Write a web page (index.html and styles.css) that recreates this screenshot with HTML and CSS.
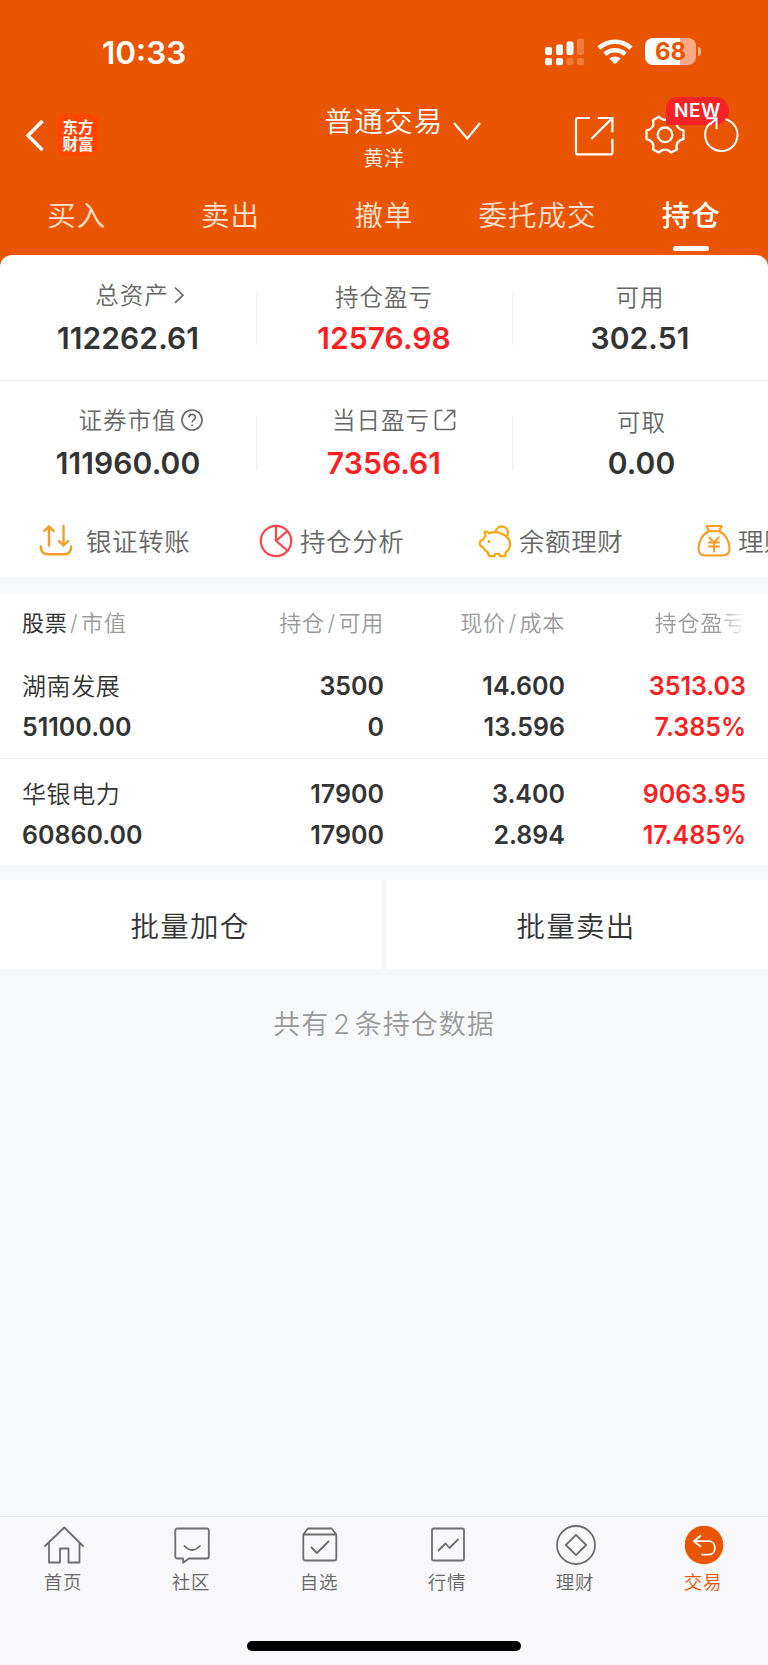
FILE: index.html
```html
<!DOCTYPE html>
<html lang="zh-CN">
  <head>
  <meta charset="utf-8">
  <title>普通交易</title>
  <link rel="stylesheet" href="styles.css">
  </head>
  <body>
    <header class="header">
      <div class="status">
        <span class="time">10:33</span>
        <svg class="signal" width="40" height="28" viewBox="0 0 40 28" fill="#fff">
          <rect x="0" y="9" width="7" height="8" rx="2"/>
          <rect x="11" y="6.500" width="7" height="10.500" rx="2"/>
          <rect x="21.500" y="3.500" width="7" height="13.500" rx="2"/>
          <rect x="32" y="0.500" width="7" height="16.500" rx="2" opacity=".22"/>
          <rect x="0" y="20" width="7" height="7.300" rx="2"/>
          <rect x="11" y="20" width="7" height="7.300" rx="2"/>
          <rect x="21.500" y="20" width="7" height="7.300" rx="2" opacity=".22"/>
          <rect x="32" y="20" width="7" height="7.300" rx="2" opacity=".22"/>
        </svg>
        <svg class="wifi" width="36" height="26" viewBox="0 0 36 26">
          <g fill="none" stroke="#fff" stroke-width="4.600">
            <path d="M2 9.200a23 23 0 0 1 32 0"/>
            <path d="M7.800 15.200a15 15 0 0 1 20.400 0"/>
          </g>
          <path d="M12.300 19.600a8.500 8.500 0 0 1 11.400 0L18 25.300z" fill="#fff"/>
        </svg>
        <span class="battery">68</span>
        <span class="nub"></span>
      </div>

      <div class="nav">
        <svg class="back" width="20" height="34" viewBox="0 0 20 34">
          <path d="M18.500 2L4 16.500l14.500 14.500" fill="none" stroke="#fff" stroke-width="3.500"/>
        </svg>
        <div class="logo"><span>东方</span><span>财富</span></div>
        <div class="title">
          <div class="title-main">普通交易</div>
          <div class="title-sub">黄洋</div>
        </div>
        <svg class="down" width="28" height="20" viewBox="0 0 28 20">
          <path d="M1 2l13.200 15.500L27 2" fill="none" stroke="#fff" stroke-width="2.200"/>
        </svg>
        <svg class="share" width="40" height="40" viewBox="0 0 40 40" fill="none" stroke="#fff" stroke-width="2.200">
          <path d="M15.700 2H4a2 2 0 0 0-2 2v32.400a2 2 0 0 0 2 2h32.400a2 2 0 0 0 2-2V22.700M23.700 2h14.700v14.300M38 2.400L17.300 23"/>
        </svg>
        <div class="gear">
          <svg width="42" height="42" viewBox="0 0 42 42" fill="none" stroke="#fff" stroke-width="2.300" stroke-linejoin="round">
            <path d="M14.800 2.800c3.500 4 9 4 12.400 0l5.800 3.400c-1.500 5.500 1 9.200 6.500 10.300v8.600c-5.500 1.100-8 4.800-6.500 10.300l-5.800 3.200c-3.400-4-8.900-4-12.400 0L9 35.400c1.500-5.500-1-9.200-6.500-10.300v-8.600C8 15.400 10.500 11.700 9 6.200z"/>
            <circle cx="21" cy="20.800" r="7.300"/>
          </svg>
          <span class="badge">NEW</span>
        </div>
        <svg class="refresh" width="38" height="38" viewBox="0 0 38 38" fill="none" stroke="#fff" stroke-width="2">
          <path d="M23.500 3.200A16.200 16.200 0 1 1 8.500 6.800M4.200 2.300h10.300v11M14.500 2.300L8 8.500"/>
        </svg>
      </div>

      <nav class="tabs">
        <span>买入</span>
        <span>卖出</span>
        <span>撤单</span>
        <span>委托成交</span>
        <span class="on">持仓</span>
      </nav>
    </header>

    <section class="assets">
      <div class="asset-row">
        <div class="asset">
          <label class="has-icon">总资产
            <svg class="more" width="14" height="22" viewBox="0 0 14 22"><path d="M3 3.500l8 7.700-8 7.700" fill="none" stroke="#666" stroke-width="1.700"/></svg>
          </label>
          <b>112262.61</b>
        </div>
        <div class="asset"><label>持仓盈亏</label><b class="red">12576.98</b></div>
        <div class="asset"><label>可用</label><b>302.51</b></div>
      </div>
      <div class="asset-row">
        <div class="asset">
          <label class="has-icon">证券市值
            <svg width="22" height="22" viewBox="0 0 22 22" fill="none" stroke="#666" stroke-width="1.600">
              <circle cx="11" cy="11" r="10"/>
              <path d="M7.800 8.600c0-4.200 6.600-4.200 6.600-.3 0 2.500-3.300 2.500-3.300 5.200"/>
              <circle cx="11.100" cy="16.300" r=".6" fill="#666" stroke-width=".8"/>
            </svg>
          </label>
          <b>111960.00</b>
        </div>
        <div class="asset">
          <label class="has-icon today">当日盈亏
            <svg width="22" height="22" viewBox="0 0 22 22" fill="none" stroke="#666" stroke-width="1.700">
              <path d="M8.500 1.500H4a2.500 2.500 0 0 0-2.500 2.500v14A2.500 2.500 0 0 0 4 20.500h14a2.500 2.500 0 0 0 2.500-2.500v-5.500M13 1.500h7.500V8.500M20 2L10 12"/>
            </svg>
          </label>
          <b class="red">7356.61</b>
        </div>
        <div class="asset last"><label>可取</label><b>0.00</b></div>
      </div>
    </section>

    <section class="actions">
      <div class="action wide">
        <svg width="34" height="34" viewBox="0 0 34 34" fill="none" stroke="#f79b27" stroke-width="2.400" stroke-linecap="round" stroke-linejoin="round">
          <path d="M10 21.500V2.500M5.300 7L10 2.300 14.700 7M24.500 2v19.500M19.800 17l4.700 4.500 4.700-4.500M1.800 22.500c0 5 2.200 7.800 7 7.800h16.400c4.800 0 7-2.800 7-7.800"/>
        </svg>
        <span>银证转账</span>
      </div>
      <div class="action">
        <svg width="34" height="34" viewBox="0 0 34 34" fill="none" stroke="#fb4549" stroke-width="2.200">
          <circle cx="17" cy="17" r="15.200"/>
          <path d="M17 2v14.800L28.300 26.500M17 16.800L28.300 7"/>
        </svg>
        <span>持仓分析</span>
      </div>
      <div class="action">
        <svg width="34" height="34" viewBox="0 0 34 34" fill="none" stroke="#faa50c" stroke-width="2.200" stroke-linejoin="round">
          <path d="M6.800 7.500c1.800 0 3.200.5 4.200 1.800 4-1.500 8.500-1.500 12 .2 5 1.800 9 5.500 9 10.500 0 4-1.500 6.500-4.200 8.500l-.8 3.700h-5l-.8-2.200h-4l-.8 2.200h-5L9.500 28C7.500 27 6.500 26 5.500 24L2.200 21.500c-.7-3-.5-4.500.8-5l2.700-1.500 1.800-3.500c-.7-1.500-1-2.500-.7-4z"/>
          <path d="M17.500 8.200a6.300 6.300 0 1 1 11.300 4.300"/>
          <circle cx="11" cy="17.500" r=".8" fill="#faa50c" stroke-width="1.400"/>
        </svg>
        <span>余额理财</span>
      </div>
      <div class="action">
        <svg width="34" height="34" viewBox="0 0 34 34" fill="none" stroke="#fb9a25" stroke-width="2.100" stroke-linejoin="round" stroke-linecap="round">
          <path d="M9.500 2h15l-2.300 5.200H11.800zM11.800 7.200C5.500 10 1.500 17.500 1.500 24.500c0 5 2.500 7 7 7h17c4.500 0 7-2 7-7 0-7-4-14.500-10.300-17.300"/>
          <path d="M12.500 13.500l4.500 5 4.500-5M12 18.500h10M12 22.500h10M17 18.500v9"/>
        </svg>
        <span>理财</span>
      </div>
    </section>

    <section class="holdings">
      <div class="grid head">
        <span><em>股票</em><i>/</i>市值</span>
        <span>持仓<i>/</i>可用</span>
        <span>现价<i>/</i>成本</span>
        <span class="fade">持仓盈亏</span>
      </div>
      <div class="grid stock">
        <span class="name">湖南发展</span><b>3500</b><b>14.600</b><b class="red">3513.03</b>
        <b>51100.00</b><b>0</b><b>13.596</b><b class="red">7.385%</b>
      </div>
      <div class="grid stock second">
        <span class="name">华银电力</span><b>17900</b><b>3.400</b><b class="red">9063.95</b>
        <b>60860.00</b><b>17900</b><b>2.894</b><b class="red">17.485%</b>
      </div>
    </section>

    <div class="batch">
      <button>批量加仓</button>
      <button>批量卖出</button>
    </div>
    <p class="summary">共有<i>2</i>条持仓数据</p>

    <footer class="footer">
      <div class="menu">
        <div class="item">
          <svg width="42" height="42" viewBox="0 0 42 42">
            <path d="M1.500 22.500L21.300 3.500l19.200 19M6 18.500V38.500h11V24.500h8.500v14H36.500V18.500"/>
          </svg>
          <span>首页</span>
        </div>
        <div class="item">
          <svg width="42" height="42" viewBox="0 0 42 42">
            <path d="M6.300 4.500h29.500a2 2 0 0 1 2 2v26a2 2 0 0 1-2 2H17.800l-5.600 4.200v-4.200H6.300a2 2 0 0 1-2-2v-26a2 2 0 0 1 2-2zM13 21.500q8 9 16.500 0"/>
          </svg>
          <span>社区</span>
        </div>
        <div class="item">
          <svg width="42" height="42" viewBox="0 0 42 42">
            <path d="M4.300 10.500h33v24a2 2 0 0 1-2 2h-29a2 2 0 0 1-2-2zM4.300 10.500l4.500-6h24l4.500 6M12 23l6 6 12-12"/>
          </svg>
          <span>自选</span>
        </div>
        <div class="item">
          <svg width="42" height="42" viewBox="0 0 42 42">
            <rect x="5" y="4.500" width="32" height="32" rx="1.500"/>
            <path d="M11 27l7.500-7.500 4 4.500 9-9"/>
          </svg>
          <span>行情</span>
        </div>
        <div class="item">
          <svg width="42" height="42" viewBox="0 0 42 42">
            <circle cx="21" cy="21" r="19"/>
            <path d="M21 10.800L31.200 21 21 31.200 10.800 21z"/>
          </svg>
          <span>理财</span>
        </div>
        <div class="item on">
          <svg width="42" height="42" viewBox="0 0 42 42">
            <circle cx="21" cy="21" r="19.300" fill="#ea5504" stroke="none"/>
            <path d="M18 11.300l-7.200 5.900 7.200 5.600M10.800 17.200h14.700c8.500 0 8.500 13.500 0 13.500H18.500" stroke="#fff"/>
          </svg>
          <span>交易</span>
        </div>
      </div>
      <div class="home-bar"></div>
    </footer>
  </body>
</html>
```
FILE: styles.css
```css
* { box-sizing: border-box; }
html, body { margin: 0; padding: 0; }
body {
  width: 768px; height: 1665px; overflow: hidden;
  display: flex; flex-direction: column;
  background: #f7f8fa; color: #333;
  font-family: Inter, "Noto Sans CJK SC", sans-serif; font-weight: 350;
}
svg { display: block; flex: none; }
b { font-weight: 600; }
i, em { font-style: normal; }
.red { color: #fb1f22; }

/* header */
.header { height: 267px; background: #ea5504; color: #fff; flex: none; }
.status { display: flex; align-items: center; height: 103px; padding-left: 102px; }
.time { width: 443px; font-size: 31.500px; font-weight: 600; line-height: 40px; padding-top: 2px; }
.wifi { margin-left: 12px; }
.battery {
  width: 51px; height: 27px; margin-left: 12px; border-radius: 8px;
  background: linear-gradient(90deg, #fff 68%, #f6ab84 68%);
  color: #ea5504; font-size: 24px; font-weight: 700; line-height: 28px; text-align: center;
}
.nub { width: 3px; height: 9px; margin-left: 2px; border-radius: 0 3px 3px 0; background: #f6ab84; }
.nav { display: flex; align-items: center; height: 65px; padding-left: 24px; }
.logo {
  display: flex; flex-direction: column; align-items: center; justify-content: center;
  width: 42px; height: 42px; margin: -2px 0 0 13px;
  border-radius: 9px; background: #ff4500;
  font: 700 15.500px/17px "Noto Sans CJK SC", sans-serif;
}
.title { width: 130px; margin: 5px 0 0 220px; text-align: center; }
.title-main { font-size: 28.500px; line-height: 36px; letter-spacing: 1.300px; }
.title-sub { font-size: 20px; line-height: 28px; letter-spacing: .5px; margin-top: 5px; }
.down { margin: -9px 0 0 4px; }
.share { margin-left: 93px; }
.gear { position: relative; margin: -1px 0 0 30px; }
.badge {
  position: absolute; left: 22px; top: -17px; width: 63px; height: 28px;
  border-radius: 11px 14px 14px 0; background: #f52328;
  font-size: 19px; font-weight: 600; line-height: 28px; text-align: center; letter-spacing: .5px;
}
.refresh { position: relative; margin: -1px 0 0 16px; }
.tabs { display: flex; height: 87px; }
.tabs span {
  flex: 1; display: flex; flex-direction: column; align-items: center;
  padding-top: 28px; font-size: 28.500px; line-height: 40px; letter-spacing: 1px; color: #fde0cf;
}
.tabs .on { color: #fff; font-weight: 500; }
.tabs .on:after { content: ""; width: 36px; height: 5px; margin-top: 10px; border-radius: 3px; background: #fff; }

/* asset summary */
.assets { position: relative; margin-top: -12px; border-radius: 12px 12px 0 0; background: #fff; flex: none; }
.asset-row { display: flex; height: 125px; padding-top: 23px; }
.asset-row + .asset-row { border-top: 1px solid #f2f2f2; padding-top: 22px; }
.asset { flex: 0 0 256px; display: flex; flex-direction: column; align-items: center; }
.asset + .asset { background: linear-gradient(#f0f0f0, #f0f0f0) 0 13px / 1px 54px no-repeat; }
.asset label {
  display: flex; align-items: center; height: 36px;
  color: #666; font-size: 23.500px; letter-spacing: 1px;
}
.asset .has-icon { height: 32px; margin-bottom: 4px; padding-left: 25px; }
.asset .today { padding-left: 20px; }
.asset label svg { margin: 2px 0 0 4px; }
.asset label .more { margin-left: 3px; }
.asset b { font-size: 30px; line-height: 48px; letter-spacing: .1px; }
.asset.last { padding-left: 3px; }

/* shortcuts */
.actions { display: flex; height: 72px; padding-left: 39px; background: #fff; overflow: hidden; flex: none; }
.action {
  display: flex; align-items: center; flex: 0 0 219px; gap: 7px;
  color: #666; font-size: 25.500px; letter-spacing: .6px; white-space: nowrap;
}
.action span { padding-bottom: 3px; }
.action.wide { gap: 13px; flex-basis: 220px; }

/* holdings */
.holdings { margin-top: 17px; background: #fff; flex: none; }
.grid { display: grid; grid-template-columns: 182px 180px 181px 181px; padding: 0 22px; }
.grid > * { text-align: right; }
.grid > :nth-child(4n+1) { text-align: left; }
.head { height: 57px; padding-bottom: 4px; align-items: center; color: #999; font-size: 22px; letter-spacing: .8px; }
.head em { color: #333; font-weight: 400; }
.head i { margin: 0 2.500px; }
.fade { -webkit-mask: linear-gradient(90deg, #000 84%, transparent); }
.stock { height: 107px; padding-top: 15px; grid-template-rows: 41px 41px; font-size: 25px; line-height: 41px; }
.stock.second { border-top: 1px solid #eee; }
.name { font-size: 24px; letter-spacing: .6px; }

.batch { display: flex; gap: 4px; margin-top: 15px; flex: none; }
.batch button {
  flex: 1; height: 89px; padding: 0 2px 0 0; border: none; background: #fff;
  color: #333; font: inherit; font-size: 28.500px; letter-spacing: 1.200px;
}
.summary { margin: 36px 0 0; text-align: center; color: #999; font-size: 27px; line-height: 40px; letter-spacing: 1px; }
.summary i { margin: 0 4px; }

/* bottom menu */
.footer { height: 149px; margin-top: auto; border-top: 1px solid #e8e9eb; background: #f8f8fa; flex: none; }
.menu { display: flex; height: 124px; padding-top: 7px; }
.item {
  flex: 1; display: flex; flex-direction: column; align-items: center;
  color: #666; font-size: 18.500px; line-height: 32px; letter-spacing: .8px;
}
.item span { margin-right: 2px; }
.item svg { fill: none; stroke: #6d6d6d; stroke-width: 1.800; stroke-linejoin: round; }
.item.on { color: #ea5504; }
.home-bar { width: 274px; height: 10px; margin: 0 auto; border-radius: 5px; background: #000; }
```
